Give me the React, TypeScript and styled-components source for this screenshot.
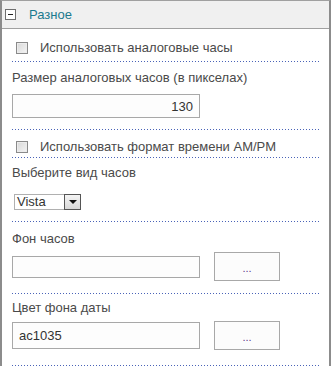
import React from "react";
import styled, { createGlobalStyle } from "styled-components";

const GlobalStyle = createGlobalStyle`
  html, body {
    margin: 0;
    padding: 0;
    background: #ffffff;
  }
  body {
    font-family: "Liberation Sans", Arial, sans-serif;
  }
`;

const Panel = styled.div`
  width: 327px;
  height: 365px;
  border-top: 1px solid #a0a0a0;
  border-left: 2px solid #8c8c8c;
  border-right: 2px solid #8c8c8c;
  overflow: hidden;
`;

const Header = styled.div`
  height: 27px;
  display: flex;
  align-items: center;
  background: #f0f0f0;
  border-bottom: 1px solid #a0a0a0;
  padding-left: 3px;
`;

const Toggle = styled.span`
  width: 9px;
  height: 9px;
  border: 1px solid #6f6f6f;
  background: #ffffff;
  display: flex;
  align-items: center;
  justify-content: center;
  margin-right: 13px;

  &::before {
    content: "";
    width: 5px;
    height: 1px;
    background: #222;
  }
`;

const Title = styled.span`
  font-size: 13px;
  color: #1b7a8e;
`;

const Body = styled.div`
  padding: 0 10px;
`;

// each section ends with a dotted blue rule
const Row = styled.div<{ $h: number; $pt?: number }>`
  height: ${(p) => p.$h}px;
  padding-top: ${(p) => p.$pt ?? 0}px;
  box-sizing: border-box;
  width: 307px;
  background: linear-gradient(to right, #4a63b8 1px, transparent 1px) repeat-x
    left bottom / 3px 1px;
  display: flex;
  flex-direction: column;
  align-items: flex-start;
`;

const CheckRow = styled.label`
  display: flex;
  align-items: center;
  gap: 12px;
  padding-left: 4px;
  font-size: 13px;
  color: #4a4a4a;
`;

const Box = styled.span`
  width: 10px;
  height: 10px;
  border: 1px solid #8a8a8a;
  background: linear-gradient(135deg, #d8d8d8, #f4f4f4);
  box-shadow: inset 0 0 0 1px #ececec;
`;

const Label = styled.div`
  font-size: 13px;
  color: #4a4a4a;
  line-height: 16px;
`;

const Field = styled.div<{ $right?: boolean; $h: number; $mt?: number }>`
  width: 188px;
  height: ${(p) => p.$h}px;
  margin-top: ${(p) => p.$mt ?? 0}px;
  border: 1px solid #a8a8a8;
  background: #fdfdfd;
  font-size: 13px;
  color: #333;
  display: flex;
  align-items: center;
  justify-content: ${(p) => (p.$right ? "flex-end" : "flex-start")};
  padding: 0 6px;
  box-sizing: border-box;
`;

const FieldLine = styled.div`
  display: flex;
  align-items: center;
  gap: 14px;
  margin-top: 5px;
`;

const DotsButton = styled.div`
  width: 66px;
  height: 29px;
  border: 1px solid #a8a8a8;
  background: #fcfcfc;
  box-sizing: border-box;
  display: flex;
  align-items: center;
  justify-content: center;
  font-size: 11px;
  color: #5a3a8a;
  padding-top: 2px;
`;

const Select = styled.div`
  width: 67px;
  height: 16px;
  margin: 13px 0 0 2px;
  border: 1px solid #b0b0b0;
  box-sizing: border-box;
  display: flex;
  align-items: stretch;
  font-size: 13px;
  color: #333;
`;

const SelectText = styled.span`
  flex: 1;
  padding-left: 2px;
  line-height: 14px;
`;

const SelectArrow = styled.span`
  width: 15px;
  border: 1px solid #555;
  background: linear-gradient(#f4f4f4, #d8d8d8);
  display: flex;
  align-items: center;
  justify-content: center;
  margin: -1px -1px -1px 0;

  &::before {
    content: "";
    border-left: 4px solid transparent;
    border-right: 4px solid transparent;
    border-top: 4px solid #111;
  }
`;

const App: React.FC = () => {
  return (
    <>
      <GlobalStyle />
      <Panel>
        <Header>
          <Toggle />
          <Title>Разное</Title>
        </Header>
        <Body>
          <Row $h={33} $pt={11}>
            <CheckRow>
              <Box />
              Использовать аналоговые часы
            </CheckRow>
          </Row>
          <Row $h={68} $pt={8}>
            <Label>Размер аналоговых часов (в пикселах)</Label>
            <Field $right $h={24} $mt={8}>
              130
            </Field>
          </Row>
          <Row $h={28} $pt={9}>
            <CheckRow>
              <Box />
              Использовать формат времени AM/PM
            </CheckRow>
          </Row>
          <Row $h={64} $pt={7}>
            <Label>Выберите вид часов</Label>
            <Select>
              <SelectText>Vista</SelectText>
              <SelectArrow />
            </Select>
          </Row>
          <Row $h={72} $pt={9}>
            <Label>Фон часов</Label>
            <FieldLine>
              <Field $h={22} />
              <DotsButton>...</DotsButton>
            </FieldLine>
          </Row>
          <Row $h={72} $pt={6}>
            <Label>Цвет фона даты</Label>
            <FieldLine>
              <Field $h={27}>ac1035</Field>
              <DotsButton>...</DotsButton>
            </FieldLine>
          </Row>
        </Body>
      </Panel>
    </>
  );
};

export default App;
